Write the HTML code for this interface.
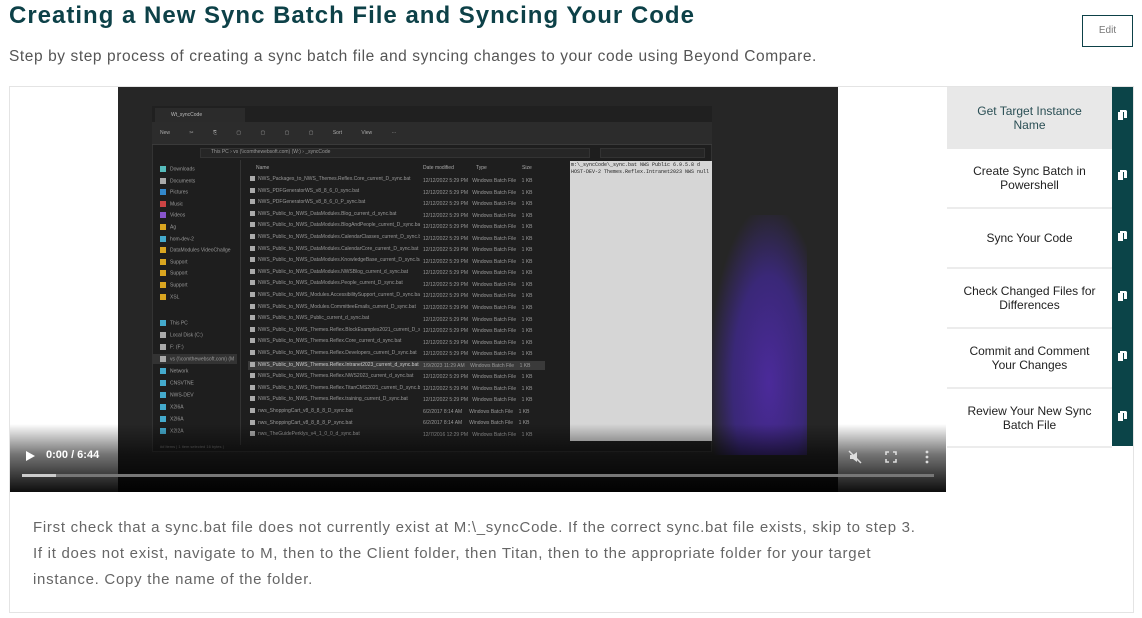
<!DOCTYPE html>
<html><head><meta charset="utf-8"><style>
*{margin:0;padding:0;box-sizing:border-box}
body{width:1142px;height:618px;background:#fff;font-family:"Liberation Sans",sans-serif;position:relative;overflow:hidden}
.a{position:absolute}
h1{position:absolute;left:9px;top:2px;font-size:24px;font-weight:bold;color:#0d4148;letter-spacing:1px;white-space:nowrap}
.sub{left:9px;top:48px;font-size:15.5px;color:#555;letter-spacing:0.58px;white-space:nowrap}
.edit{left:1082px;top:15px;width:51px;height:32px;border:1px solid #0d4148;font-size:10px;color:#777;text-align:center;line-height:30px}
.box{left:9px;top:86px;width:1125px;height:527px;border:1px solid #e4e4e4}
.tab{position:absolute;left:947px;width:165px;display:flex;align-items:center;justify-content:center;text-align:center;font-size:12px;color:#222;line-height:14px;font-family:"Liberation Sans",sans-serif;background:#fff;border-bottom:2px solid #ececec}
.side{left:1112px;top:87px;width:21px;height:359px;background:#0b4448}
.ic{position:absolute;left:1118px;width:9px;height:11px}
.row{position:absolute;left:250px;height:8px;font-size:5px;color:#999;white-space:nowrap;width:170px;overflow:hidden}
.row i{display:inline-block;width:5px;height:5px;background:#aaa;margin-right:3px;vertical-align:middle}
.sb{position:absolute;left:160px;font-size:5px;color:#999;white-space:nowrap}
.sb i{display:inline-block;width:6px;height:6px;background:#d9a520;margin-right:4px;vertical-align:middle}
p.t{position:absolute;left:33px;top:515px;font-size:15px;color:#666;line-height:26px;width:920px;letter-spacing:0.72px;white-space:nowrap}
</style></head><body>
<h1>Creating a New Sync Batch File and Syncing Your Code</h1>
<div class="a sub">Step by step process of creating a sync batch file and syncing changes to your code using Beyond Compare.</div>
<div class="a edit">Edit</div>
<div class="a box"></div>

<div class="a" style="left:10px;top:87px;width:936px;height:405px;background:#fff"></div>
<div class="a" style="left:118px;top:87px;width:720px;height:405px;background:#262626"></div>
<div class="a" style="left:712px;top:215px;width:95px;height:240px;background:radial-gradient(ellipse at 60% 70%,#4b2a9a 0%,#3a2878 45%,rgba(38,38,38,0) 75%)"></div>
<div class="a" style="left:152px;top:106px;width:560px;height:346px;background:#1e1e1e;border:1px solid #333"></div>
<div class="a" style="left:152px;top:106px;width:560px;height:16px;background:#202020"></div>
<div class="a" style="left:155px;top:108px;width:90px;height:14px;background:#2b2b2b;font-size:5px;color:#bbb;padding:4px 0 0 16px">Wt_syncCode</div>
<div class="a" style="left:152px;top:122px;width:560px;height:23px;background:#2c2c2c;border-bottom:1px solid #3a3a3a"></div>
<div class="a" style="left:160px;top:130px;font-size:5px;color:#aaa;word-spacing:18px">New ✂ ⎘ ▢ ▢ ▢ ▢ Sort View ···</div>
<div class="a" style="left:200px;top:148px;width:390px;height:10px;background:#262626;border:1px solid #333;font-size:5px;color:#999;padding-left:10px">This PC › vs (\\comthewebsoft.com) (W:) › _syncCode</div>
<div class="a" style="left:600px;top:148px;width:105px;height:10px;background:#262626;border:1px solid #333"></div>
<div class="a" style="left:240px;top:160px;width:1px;height:285px;background:#333"></div>
<div class="a" style="left:256px;top:165px;font-size:5px;color:#aaa">Name</div>
<div class="a" style="left:423px;top:165px;font-size:5px;color:#aaa">Date modified</div>
<div class="a" style="left:476px;top:165px;font-size:5px;color:#aaa">Type</div>
<div class="a" style="left:522px;top:165px;font-size:5px;color:#aaa">Size</div>
<div class="a" style="left:248px;top:361px;width:297px;height:9px;background:#3a3a3a"></div>
<div class="a" style="left:570px;top:161px;width:142px;height:280px;background:#d6d6d6"></div>
<div class="a" style="left:571px;top:162px;font-size:5px;color:#222;font-family:'Liberation Mono',monospace;line-height:7px">m:\_syncCode\_sync.bat NWS Public 6.9.5.8 d<br>HOST-DEV-2 Themes.Reflex.Intranet2023 NWS null</div>
<div class="a" style="left:152px;top:444px;width:560px;height:8px;font-size:4px;color:#777;padding-left:8px">## items | 1 item selected 16 bytes |</div>

<div class="sb" style="top:166px"><i style="background:#5bb"></i>Downloads</div>
<div class="sb" style="top:178px"><i style="background:#aaa"></i>Documents</div>
<div class="sb" style="top:189px"><i style="background:#38c"></i>Pictures</div>
<div class="sb" style="top:201px"><i style="background:#c44"></i>Music</div>
<div class="sb" style="top:212px"><i style="background:#85c"></i>Videos</div>
<div class="sb" style="top:224px"><i></i>Ag</div>
<div class="sb" style="top:236px"><i style="background:#4ac"></i>hom-dev-2</div>
<div class="sb" style="top:247px"><i></i>DataModules VideoChallge</div>
<div class="sb" style="top:259px"><i></i>Support</div>
<div class="sb" style="top:270px"><i></i>Support</div>
<div class="sb" style="top:282px"><i></i>Support</div>
<div class="sb" style="top:294px"><i></i>XSL</div>
<div class="sb" style="top:320px"><i style="background:#4ac"></i>This PC</div>
<div class="sb" style="top:332px"><i style="background:#aaa"></i>Local Disk (C:)</div>
<div class="sb" style="top:344px"><i style="background:#aaa"></i>F: (F:)</div>
<div class="a" style="left:153px;top:354px;width:84px;height:10px;background:#333"></div>
<div class="sb" style="top:356px"><i style="background:#aaa"></i>vs (\\comthewebsoft.com) (M</div>
<div class="sb" style="top:368px"><i style="background:#4ac"></i>Network</div>
<div class="sb" style="top:380px"><i style="background:#4ac"></i>CNSVTNE</div>
<div class="sb" style="top:392px"><i style="background:#4ac"></i>NWS-DEV</div>
<div class="sb" style="top:404px"><i style="background:#4ac"></i>X2I6A</div>
<div class="sb" style="top:416px"><i style="background:#4ac"></i>X2I6A</div>
<div class="sb" style="top:428px"><i style="background:#4ac"></i>X2I2A</div>

<div class="row" style="top:176px"><i></i>NWS_Packages_to_NWS_Themes.Reflex.Core_current_D_sync.bat</div>
<div class="row" style="top:188px"><i></i>NWS_PDFGeneratorWS_v8_8_6_0_sync.bat</div>
<div class="row" style="top:199px"><i></i>NWS_PDFGeneratorWS_v8_8_6_0_P_sync.bat</div>
<div class="row" style="top:211px"><i></i>NWS_Public_to_NWS_DataModules.Blog_current_d_sync.bat</div>
<div class="row" style="top:222px"><i></i>NWS_Public_to_NWS_DataModules.BlogAndPeople_current_D_sync.bat</div>
<div class="row" style="top:234px"><i></i>NWS_Public_to_NWS_DataModules.CalendarClasses_current_D_sync.bat</div>
<div class="row" style="top:246px"><i></i>NWS_Public_to_NWS_DataModules.CalendarCore_current_D_sync.bat</div>
<div class="row" style="top:257px"><i></i>NWS_Public_to_NWS_DataModules.KnowledgeBase_current_D_sync.bat</div>
<div class="row" style="top:269px"><i></i>NWS_Public_to_NWS_DataModules.NWSBlog_current_d_sync.bat</div>
<div class="row" style="top:280px"><i></i>NWS_Public_to_NWS_DataModules.People_current_D_sync.bat</div>
<div class="row" style="top:292px"><i></i>NWS_Public_to_NWS_Modules.AccessibilitySupport_current_D_sync.bat</div>
<div class="row" style="top:304px"><i></i>NWS_Public_to_NWS_Modules.CommitteeEmails_current_D_sync.bat</div>
<div class="row" style="top:315px"><i></i>NWS_Public_to_NWS_Public_current_d_sync.bat</div>
<div class="row" style="top:327px"><i></i>NWS_Public_to_NWS_Themes.Reflex.BlockExamples2021_current_D_sync.bat</div>
<div class="row" style="top:338px"><i></i>NWS_Public_to_NWS_Themes.Reflex.Core_current_d_sync.bat</div>
<div class="row" style="top:350px"><i></i>NWS_Public_to_NWS_Themes.Reflex.Developers_current_D_sync.bat</div>
<div class="row" style="top:362px;color:#ccc"><i></i>NWS_Public_to_NWS_Themes.Reflex.Intranet2023_current_d_sync.bat</div>
<div class="row" style="top:373px"><i></i>NWS_Public_to_NWS_Themes.Reflex.NWS2023_current_d_sync.bat</div>
<div class="row" style="top:385px"><i></i>NWS_Public_to_NWS_Themes.Reflex.TitanCMS2021_current_D_sync.bat</div>
<div class="row" style="top:396px"><i></i>NWS_Public_to_NWS_Themes.Reflex.training_current_D_sync.bat</div>
<div class="row" style="top:408px"><i></i>nws_ShoppingCart_v8_8_8_8_D_sync.bat</div>
<div class="row" style="top:420px"><i></i>nws_ShoppingCart_v8_8_8_8_P_sync.bat</div>
<div class="row" style="top:431px"><i></i>nws_TheGuidePerklys_v4_1_0_0_d_sync.bat</div>
<div class="a" style="left:423px;top:176px;width:130px;height:263px;font-size:5px;color:#999;line-height:11.55px;white-space:pre">12/12/2022 5:29 PM   Windows Batch File    1 KB
12/12/2022 5:29 PM   Windows Batch File    1 KB
12/12/2022 5:29 PM   Windows Batch File    1 KB
12/12/2022 5:29 PM   Windows Batch File    1 KB
12/12/2022 5:29 PM   Windows Batch File    1 KB
12/12/2022 5:29 PM   Windows Batch File    1 KB
12/12/2022 5:29 PM   Windows Batch File    1 KB
12/12/2022 5:29 PM   Windows Batch File    1 KB
12/12/2022 5:29 PM   Windows Batch File    1 KB
12/12/2022 5:29 PM   Windows Batch File    1 KB
12/12/2022 5:29 PM   Windows Batch File    1 KB
12/12/2022 5:29 PM   Windows Batch File    1 KB
12/12/2022 5:29 PM   Windows Batch File    1 KB
12/12/2022 5:29 PM   Windows Batch File    1 KB
12/12/2022 5:29 PM   Windows Batch File    1 KB
12/12/2022 5:29 PM   Windows Batch File    1 KB
1/9/2023 11:29 AM    Windows Batch File    1 KB
12/12/2022 5:29 PM   Windows Batch File    1 KB
12/12/2022 5:29 PM   Windows Batch File    1 KB
12/12/2022 5:29 PM   Windows Batch File    1 KB
6/2/2017 8:14 AM     Windows Batch File    1 KB
6/2/2017 8:14 AM     Windows Batch File    1 KB
12/7/2016 12:29 PM   Windows Batch File    1 KB</div>

<div class="a" style="left:10px;top:424px;width:936px;height:68px;background:linear-gradient(180deg,rgba(0,0,0,0),rgba(0,0,0,.55) 45%,rgba(0,0,0,.95))"></div>
<svg class="a" style="left:24px;top:450px" width="12" height="12"><path d="M2 1 L11 6 L2 11Z" fill="#fff"/></svg>
<div class="a" style="left:46px;top:449px;font-size:11px;font-weight:bold;color:#fff">0:00 / 6:44</div>
<div class="a" style="left:22px;top:474px;width:912px;height:3px;background:#777"></div>
<div class="a" style="left:22px;top:474px;width:34px;height:3px;background:#ccc"></div>
<svg class="a" style="left:848px;top:450px" width="14" height="14"><path d="M2 5h3l4-3v10l-4-3H2z" fill="#ddd"/><path d="M1 1 L13 13" stroke="#ddd" stroke-width="1.5"/></svg>
<svg class="a" style="left:885px;top:451px" width="12" height="12" fill="none" stroke="#ddd" stroke-width="1.6"><path d="M1 4V1h3M8 1h3v3M11 8v3H8M4 11H1V8"/></svg>
<svg class="a" style="left:924px;top:450px" width="6" height="14"><circle cx="3" cy="2" r="1.4" fill="#ddd"/><circle cx="3" cy="7" r="1.4" fill="#ddd"/><circle cx="3" cy="12" r="1.4" fill="#ddd"/></svg>

<div class="tab" style="top:87px;height:62px;background:#e8e8e8;color:#2b4f55;border:none">Get Target Instance<br>Name</div>
<div class="tab" style="top:149px;height:60px">Create Sync Batch in<br>Powershell</div>
<div class="tab" style="top:209px;height:60px">Sync Your Code</div>
<div class="tab" style="top:269px;height:60px">Check Changed Files for<br>Differences</div>
<div class="tab" style="top:329px;height:60px">Commit and Comment<br>Your Changes</div>
<div class="tab" style="top:389px;height:59px">Review Your New Sync<br>Batch File</div>
<div class="a side"></div>
<svg class="ic" style="top:110px" viewBox="0 0 9 11"><path d="M0 2h5v8H0z M2 0h6l1 1v7H6V2H2z" fill="#fff"/></svg>
<svg class="ic" style="top:170px" viewBox="0 0 9 11"><path d="M0 2h5v8H0z M2 0h6l1 1v7H6V2H2z" fill="#fff"/></svg>
<svg class="ic" style="top:231px" viewBox="0 0 9 11"><path d="M0 2h5v8H0z M2 0h6l1 1v7H6V2H2z" fill="#fff"/></svg>
<svg class="ic" style="top:291px" viewBox="0 0 9 11"><path d="M0 2h5v8H0z M2 0h6l1 1v7H6V2H2z" fill="#fff"/></svg>
<svg class="ic" style="top:351px" viewBox="0 0 9 11"><path d="M0 2h5v8H0z M2 0h6l1 1v7H6V2H2z" fill="#fff"/></svg>
<svg class="ic" style="top:411px" viewBox="0 0 9 11"><path d="M0 2h5v8H0z M2 0h6l1 1v7H6V2H2z" fill="#fff"/></svg>

<p class="t">First check that a sync.bat file does not currently exist at M:\_syncCode. If the correct sync.bat file exists, skip to step 3.<br>If it does not exist, navigate to M, then to the Client folder, then Titan, then to the appropriate folder for your target<br>instance. Copy the name of the folder.</p>
</body></html>
